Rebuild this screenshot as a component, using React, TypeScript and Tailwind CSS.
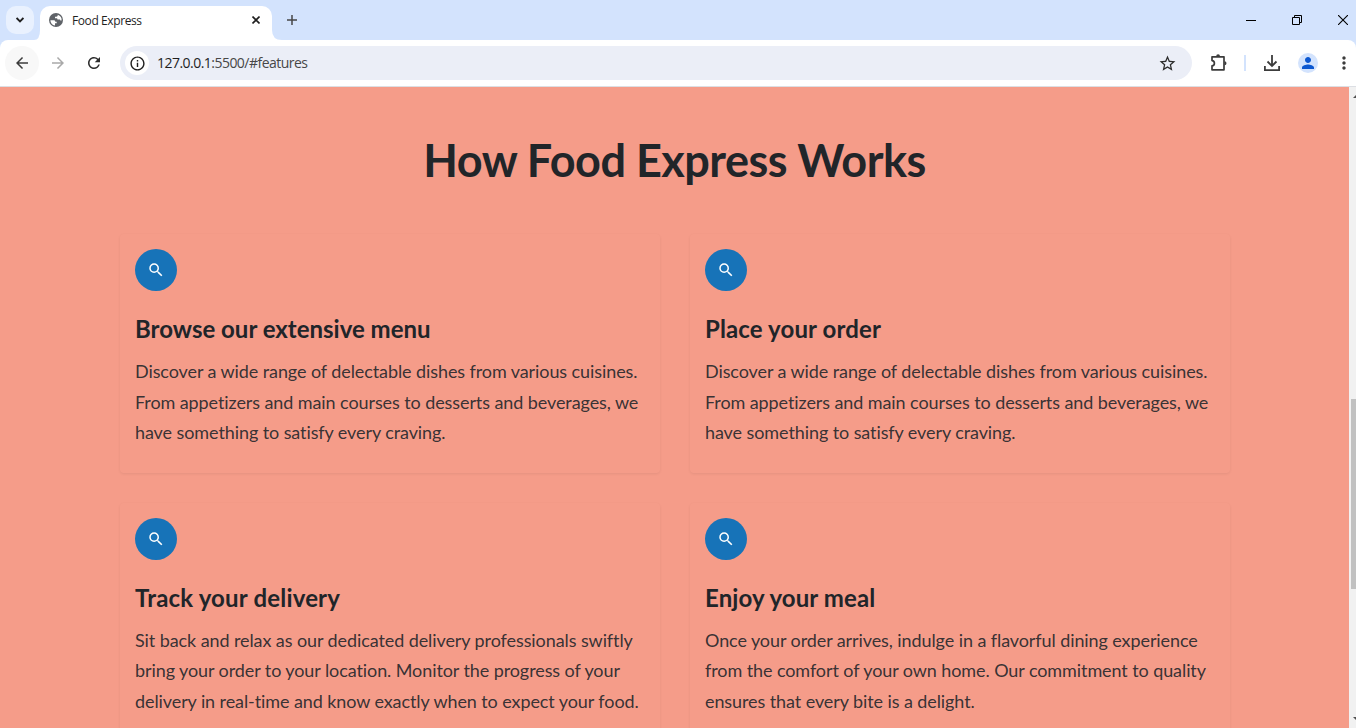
import React from 'react';
import {
  MdArrowBack, MdArrowForward, MdRefresh, MdOutlineInfo, MdStarBorder,
  MdPerson, MdMoreVert, MdSearch,
} from 'react-icons/md';

const DISHES = [
  'Discover a wide range of delectable dishes from various cuisines.',
  'From appetizers and main courses to desserts and beverages, we',
  'have something to satisfy every craving.',
];

const FEATURES = [
  { title: 'Browse our extensive menu', tracking: 'tracking-normal', lines: DISHES },
  { title: 'Place your order', tracking: 'tracking-[0.12px]', lines: DISHES },
  {
    title: 'Track your delivery',
    tracking: 'tracking-[0.18px]',
    lines: [
      'Sit back and relax as our dedicated delivery professionals swiftly',
      'bring your order to your location. Monitor the progress of your',
      'delivery in real-time and know exactly when to expect your food.',
    ],
  },
  {
    title: 'Enjoy your meal',
    tracking: 'tracking-[0.1px]',
    lines: [
      'Once your order arrives, indulge in a flavorful dining experience',
      'from the comfort of your own home. Our commitment to quality',
      'ensures that every bite is a delight.',
    ],
  },
];

function TabStrip() {
  return (
    <div className="flex h-10 shrink-0 bg-[#d3e3fd]">
      <div className="ml-1.5 mt-1.5 flex h-7 w-7 items-center justify-center rounded-[10px] bg-[#e9f1fe]">
        <svg width="8" height="6" viewBox="0 0 8 6" fill="none" stroke="#1f1f1f" strokeWidth="1.8"><path d="M.6 1L4 4.400 7.400 1" /></svg>
      </div>
      <div className="flex items-end">
        <svg width="6" height="10" viewBox="0 0 6 10"><path d="M6 0v10H0q6 0 6-10z" fill="#fff" /></svg>
      </div>
      <div className="mt-1.5 flex w-[232px] items-center rounded-t-[10px] bg-white pb-1.5 pl-[9px] pr-3">
        <svg width="14" height="14" viewBox="0 0 14 14">
          <circle cx="7" cy="7" r="7" fill="#5f6368" />
          <path d="M1.4 7.2h3.2c1.2 0 1.7.6 1.7 1.6h1.4v1.5H6v2.2A5.6 5.6 0 0 1 1.4 7.2zM8.700 1.700v.8c0 .7-.6 1.2-1.3 1.2H6v1.500h1.300c.8 0 1.200.5 1.200 1.400h2c.7 0 .8.4.8 1h1.300a5.600 5.600 0 0 0-3.900-5.900z" fill="#fff" />
        </svg>
        <span className="ml-[9px] mt-px text-[12px] leading-4 tracking-[-0.4px] text-[#1f1f1f] [font-family:'Open_Sans',sans-serif]">Food Express</span>
        <svg width="8" height="8" viewBox="0 0 8 8" className="ml-auto" stroke="#1f1f1f" strokeWidth="1.6"><path d="M.5.5l7 7M7.500.5l-7 7" /></svg>
      </div>
      <div className="flex items-end">
        <svg width="10" height="10" viewBox="0 0 10 10"><path d="M0 0v10h10Q0 10 0 0z" fill="#fff" /></svg>
      </div>
      <svg width="10" height="10" viewBox="0 0 10 10" className="ml-[5px] mt-[15px]" stroke="#474747" strokeWidth="1.5"><path d="M5 0v10M0 5h10" /></svg>
      <div className="ml-auto flex gap-9 pr-2 pt-[15px]">
        <svg width="10" height="10" viewBox="0 0 10 10"><path d="M0 5.5h10" stroke="#000" /></svg>
        <svg width="10" height="10" viewBox="0 0 10 10" fill="none" stroke="#000"><path d="M.5 2.5h7v7h-7zM2.5 2.5v-2h7v7h-2" /></svg>
        <svg width="10" height="10" viewBox="0 0 10 10"><path d="M0 0l10 10M10 0L0 10" stroke="#000" strokeWidth="1.1" /></svg>
      </div>
    </div>
  );
}

function Toolbar() {
  return (
    <div className="h-[47px] shrink-0 bg-[#d3e3fd]">
      <div className="flex h-[47px] items-center rounded-t-[8px] border-b border-[#dcdfe4] bg-white pl-[5px]">
        <div className="flex h-[34px] w-[34px] items-center justify-center rounded-full bg-[#f8f8f8]">
          <MdArrowBack size={18} className="text-[#3c3c3c]" />
        </div>
        <MdArrowForward size={18} className="ml-2.5 text-[#a9a9a9]" />
        <MdRefresh size={18} className="ml-[18px] text-[#2c2c2c]" />
        <div className="ml-[17px] flex h-[34px] w-[1072px] items-center rounded-full bg-[#ebeef7] pl-[5px] pr-[15px]">
          <div className="flex h-6 w-6 items-center justify-center rounded-full bg-white">
            <MdOutlineInfo size={17} className="text-[#1f1f1f]" />
          </div>
          <span className="ml-2 text-[14px] leading-5 tracking-[-0.53px] text-[#474747] [font-family:'Open_Sans',sans-serif]">
            <span className="text-[#1f1f1f]">127.0.0.1</span>:5500/#features
          </span>
          <MdStarBorder size={19} className="ml-auto text-[#2c2c2c]" />
        </div>
        <svg width="18" height="18" viewBox="0 0 18 18" className="ml-[18px]" fill="none" stroke="#3c3c3c" strokeWidth="1.7">
          <path d="M2 2.800h12v13H2v-4c3.200-.2 3.200-5 0-5.200z" strokeLinejoin="round" />
          <path d="M6.200 2.200a1.900 1.900 0 0 1 3.800 0zM14.500 7.300a2 2 0 0 1 0 4z" fill="#3c3c3c" stroke="none" />
        </svg>
        <div className="ml-4 h-4 w-0.5 bg-[#d3e3fd]" />
        <svg width="16" height="16" viewBox="0 0 16 16" className="ml-[18px]" fill="none" stroke="#3c3c3c" strokeWidth="1.8">
          <path d="M8 0v11M3.500 6.500L8 11l4.500-4.500M.9 11v4.100h14.200V11" />
        </svg>
        <div className="ml-[18px] flex h-5 w-5 items-center justify-center rounded-full bg-[#d3e3fd]">
          <MdPerson size={18} className="text-[#0b57d0]" />
        </div>
        <MdMoreVert size={20} className="ml-4 shrink-0 text-[#3c3c3c]" />
      </div>
    </div>
  );
}

function Scrollbar() {
  return (
    <div className="flex w-[7px] shrink-0 flex-col items-end bg-[#f1f1f1]">
      <svg width="3" height="3" viewBox="0 0 3 3" className="mt-2"><path d="M0 3L3 0v3z" fill="#505050" /></svg>
      <div className="mt-[301px] h-[190px] w-[5px] bg-[#c1c1c1]" />
      <svg width="3" height="3" viewBox="0 0 3 3" className="mb-2 mt-auto"><path d="M0 0h3v3z" fill="#505050" /></svg>
    </div>
  );
}

type FeatureCardProps = { title: string; tracking: string; lines: string[] };

function FeatureCard({ title, tracking, lines }: FeatureCardProps) {
  return (
    <article className="h-[238.6px] rounded-[4px] p-[15px] shadow-[0_1px_3px_rgba(0,0,0,0.07)]">
      <div className="flex h-[42px] w-[42px] items-center justify-center rounded-full bg-[#1773b8]">
        <MdSearch size={18} className="text-white" />
      </div>
      <h2 className={`mt-[23px] text-[24px] font-bold leading-[29px] ${tracking}`}>{title}</h2>
      <p className="mt-[13px] whitespace-nowrap text-[18px] leading-[30.6px] tracking-[-0.09px] text-[#212529]/90">
        {lines.map((line) => (
          <span key={line} className="block">{line}</span>
        ))}
      </p>
    </article>
  );
}

export default function App() {
  return (
    <div className="flex h-[728px] w-[1356px] flex-col overflow-hidden">
      <TabStrip />
      <Toolbar />
      <div className="flex min-h-0 flex-1">
        <main className="min-w-0 flex-1 overflow-hidden bg-[#f59c89] text-[#212529] [font-family:Lato,sans-serif] [font-variant-ligatures:none]">
          <h1 className="mt-[46px] text-center text-[45px] font-bold leading-[54px] tracking-[-0.5px]">How Food Express Works</h1>
          <section className="ml-[120px] mt-[47px] grid w-[1110px] grid-cols-2 gap-[30px]">
            {FEATURES.map((feature) => (
              <FeatureCard key={feature.title} {...feature} />
            ))}
          </section>
        </main>
        <Scrollbar />
      </div>
    </div>
  );
}
